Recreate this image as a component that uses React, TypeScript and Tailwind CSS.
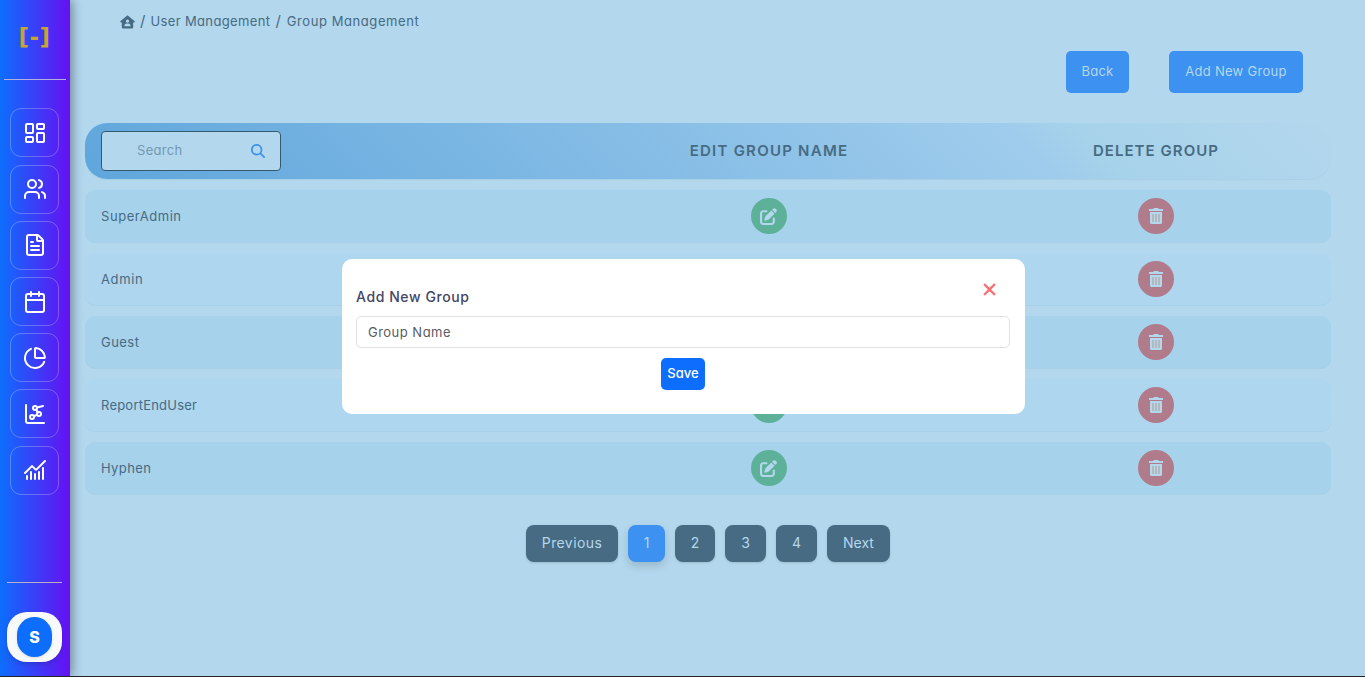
import React from "react";
import { Calendar, LayoutDashboard, Users, FileText, ChartPie, ChartNetwork, ChartNoAxesCombined } from "lucide-react";
import { FaMagnifyingGlass, FaPenToSquare, FaXmark } from "react-icons/fa6";

function HomeIcon() {
  return (
    <svg width="15" height="14" viewBox="0 0 15 14" fill="currentColor">
      <path
        fillRule="evenodd"
        d="M7.500 0.300 L15 6.600 Q14.700 7.600 13.200 7.400 V12 a1.500 1.500 0 0 1 -1.500 1.500 H3.300 A1.500 1.500 0 0 1 1.800 12 V7.400 Q0.300 7.600 0 6.600 Z M7.500 4.600 a1.600 1.600 0 1 0 0.010 0 Z M4.400 11.300 h6.200 c0 -2 -1 -2.900 -2.400 -2.900 h-1.400 c-1.400 0 -2.400 0.900 -2.400 2.900 Z"
      />
    </svg>
  );
}

function TrashIcon() {
  return (
    <svg width="16" height="16" viewBox="0 0 16 16">
      <path fill="currentColor" d="M5.500 0h5v1H15v2H1V1h4.500Z M2 4h12v10.500a1.500 1.500 0 0 1-1.500 1.500h-9A1.500 1.500 0 0 1 2 14.500Z" />
      <path d="M5 6v8M8 6v8M11 6v8" stroke="#b59a8b" strokeWidth="1" />
    </svg>
  );
}

const navIcons = [
  LayoutDashboard,
  Users,
  FileText,
  Calendar,
  ChartPie,
  ChartNetwork,
  ChartNoAxesCombined,
];

const groups = [
  { name: "SuperAdmin", tracking: "tracking-[0.550px]" },
  { name: "Admin", tracking: "tracking-[0.650px]" },
  { name: "Guest", tracking: "tracking-[0.450px]" },
  { name: "ReportEndUser", tracking: "tracking-[0.220px]" },
  { name: "Hyphen", tracking: "tracking-[0.400px]" },
];

const pages = [
  { label: "Previous", className: "w-[92px] bg-[#466b82] tracking-[0.400px] shadow-sm" },
  { label: "1", className: "w-[37px] bg-[#3d91f0] shadow-[0_4px_8px_rgba(0,0,0,0.15)]" },
  { label: "2", className: "w-10 bg-[#466b82] shadow-sm" },
  { label: "3", className: "w-[41px] bg-[#466b82] shadow-sm" },
  { label: "4", className: "w-[41px] bg-[#466b82] shadow-sm" },
  { label: "Next", className: "w-[63px] bg-[#466b82] shadow-sm" },
];

function Sidebar() {
  return (
    <aside className="z-10 flex h-full w-[70px] shrink-0 flex-col items-center bg-[linear-gradient(to_right,#0d6efd,#6610f2)] pr-px shadow-[2px_0_10px_rgba(0,0,0,0.4)]">
      <div className="flex h-[79px] items-center pb-1 font-[DejaVu_Sans,sans-serif] text-[23px] font-bold tracking-[0.500px] text-[#c5a336]">[-]</div>
      <div className="ml-px h-px w-[62px] bg-[#b4b0dd]" />
      <nav className="mt-[28.450px] flex flex-col gap-[7.200px]">
        {navIcons.map((Icon, i) => (
          <button key={i} className="flex size-[49px] items-center justify-center rounded-[11px] border border-white/25 pl-px text-white">
            <Icon size={24} />
          </button>
        ))}
      </nav>
      <div className="mt-auto h-px w-[55px] bg-[#b4b0c8]" />
      <div className="mt-[29px] mb-[14px] flex h-[50px] w-[55px] items-center justify-center rounded-[20px] bg-[#f8f9fa] shadow-md">
        <div className="flex h-10 w-[35px] items-center justify-center rounded-full bg-[#0d6efd] text-base font-extrabold text-white shadow">S</div>
      </div>
    </aside>
  );
}

function Dialog() {
  return (
    <div className="absolute top-[259px] left-[342px] h-[155px] w-[683px] rounded-[10px] bg-white px-3.5 pt-[20px]">
      <div className="flex h-[37px] justify-between">
        <h2 className="pt-[7px] text-[14px] leading-[21px] font-medium tracking-[0.580px] text-[#454565]">Add New Group</h2>
        <FaXmark className="mt-[1px] mr-[12px] size-[19px] text-[#f87171]" />
      </div>
      <input
        className="block h-8 w-[654px] rounded-[5px] border border-[#dee2e6] px-[11px] text-[13px] tracking-[0.480px] text-[#212529] placeholder-[#595c5f]"
        placeholder="Group Name"
      />
      <button className="mt-2.5 ml-[305px] block h-8 w-11 rounded-[5px] bg-[#0d6efd] text-[13px] font-medium text-white">Save</button>
    </div>
  );
}

export default function App() {
  return (
    <div
      className="relative flex h-[677px] w-[1365px] overflow-hidden border-b border-[#212529] bg-[#b3d7ed] font-[Inter,sans-serif] text-[#466b82] [font-feature-settings:'cv11']"
    >
      <Sidebar />
      <main className="flex flex-1 flex-col pr-[34px] pl-[15px]">
        <div className="flex h-[43px] items-center pl-[35px] text-[13px] whitespace-nowrap">
          <HomeIcon />
          <span className="ml-[5px] text-[15px]">/</span>
          <span className="ml-[5px] tracking-[0.370px]">User Management</span>
          <span className="ml-[5px] text-[15px]">/</span>
          <span className="ml-[6px] tracking-[0.570px]">Group Management</span>
        </div>
        <div className="mt-2 flex h-[42px] justify-end gap-10 pr-[28px] text-[13px] text-[#b3d7ed]">
          <button className="w-[63px] rounded-[5px] bg-[#3d91f0] tracking-[0.200px]">Back</button>
          <button className="w-[134px] rounded-[5px] bg-[#3d91f0] tracking-[0.300px]">Add New Group</button>
        </div>
        <div className="mt-[30px] grid h-14 grid-cols-[490px_387px_369px] items-center rounded-[22px] bg-[linear-gradient(45deg,#5fa6dc,#9fccec_75%,#a6d2ea_80%,#b3d7ed)] shadow-[0_1px_1px_rgba(0,60,100,0.06)]">
          <div className="ml-4 flex h-10 w-[180px] items-center justify-between rounded border border-[#355a70] bg-[#b3d7ed] pr-[15px] pl-[35px] text-[13px]">
            <span className="tracking-[0.300px] text-[#7499b1]">Search</span>
            <FaMagnifyingGlass className="size-[14px] text-[#3d91f0]" />
          </div>
          <div className="pl-px text-center text-[15px] font-semibold tracking-[1.240px]">EDIT GROUP NAME</div>
          <div className="pl-[19px] text-center text-[15px] font-semibold tracking-[1.050px]">DELETE GROUP</div>
        </div>
        <div className="mt-[11px] flex flex-col gap-2.5">
          {groups.map((group, i) => (
            <div
              key={group.name}
              className={`grid h-[53px] grid-cols-[490px_387px_369px] items-center rounded-[10px] pb-px shadow-[inset_0_-1px_0_#a8d0e6] ${i % 2 ? "bg-[#aed6ef]" : "bg-[#a6d2eb]"}`}
            >
              <span className={`pt-0.5 pl-4 text-[13px] ${group.tracking}`}>{group.name}</span>
              <span className="mx-auto flex size-9 items-center justify-center rounded-full bg-[#5cb198] text-[#b3d7ed]">
                <FaPenToSquare size={17} />
              </span>
              <div className="flex justify-center pl-[18px]">
                <span className="flex size-9 items-center justify-center rounded-full bg-[#b07b8a] text-[#b3d7ed]">
                  <TrashIcon />
                </span>
              </div>
            </div>
          ))}
        </div>
        <div className="mt-[30px] flex h-[37px] justify-center gap-2.5 text-[14px] text-[#b3d7ed]">
          {pages.map((p) => (
            <button key={p.label} className={`rounded-[8px] pb-0.5 ${p.className}`}>
              {p.label}
            </button>
          ))}
        </div>
      </main>
      <Dialog />
    </div>
  );
}
